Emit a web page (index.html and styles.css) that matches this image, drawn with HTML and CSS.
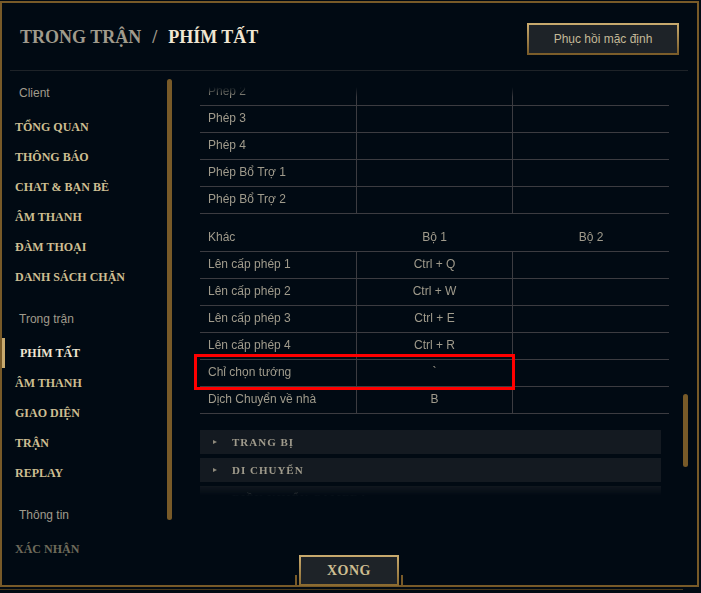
FILE: index.html
```html
<!DOCTYPE html>
<html lang="vi">
<head>
<meta charset="utf-8">
<title>Phím tắt</title>
<link rel="stylesheet" href="styles.css">
</head>
<body>
<div class="frame">
  <header class="header">
    <h1 class="title"><span class="crumb">TRONG TRẬN</span><span class="sep">/</span><span class="current">PHÍM TẤT</span></h1>
    <button class="btn-reset">Phục hồi mặc định</button>
  </header>
  <div class="body">
    <aside class="sidebar">
      <nav class="nav">
        <div class="nav-group">Client</div>
        <a class="nav-item">TỔNG QUAN</a>
        <a class="nav-item">THÔNG BÁO</a>
        <a class="nav-item">CHAT &amp; BẠN BÈ</a>
        <a class="nav-item">ÂM THANH</a>
        <a class="nav-item">ĐÀM THOẠI</a>
        <a class="nav-item">DANH SÁCH CHẶN</a>
        <div class="nav-group spaced">Trong trận</div>
        <a class="nav-item active">PHÍM TẤT</a>
        <a class="nav-item">ÂM THANH</a>
        <a class="nav-item">GIAO DIỆN</a>
        <a class="nav-item">TRẬN</a>
        <a class="nav-item">REPLAY</a>
        <div class="nav-group spaced">Thông tin</div>
        <a class="nav-item dim">XÁC NHẬN</a>
      </nav>
      <div class="side-track"><div class="side-thumb"></div></div>
    </aside>
    <main class="main">
      <div class="viewport">
        <div class="content">
          <div class="table t1">
            <div class="row"><div class="cell">Phép 2</div><div class="cell"></div><div class="cell"></div></div>
            <div class="row"><div class="cell">Phép 3</div><div class="cell"></div><div class="cell"></div></div>
            <div class="row"><div class="cell">Phép 4</div><div class="cell"></div><div class="cell"></div></div>
            <div class="row"><div class="cell">Phép Bổ Trợ 1</div><div class="cell"></div><div class="cell"></div></div>
            <div class="row"><div class="cell">Phép Bổ Trợ 2</div><div class="cell"></div><div class="cell"></div></div>
          </div>
          <div class="table t2">
            <div class="row head"><div class="cell">Khác</div><div class="cell">Bộ 1</div><div class="cell">Bộ 2</div></div>
            <div class="row"><div class="cell">Lên cấp phép 1</div><div class="cell">Ctrl + Q</div><div class="cell"></div></div>
            <div class="row"><div class="cell">Lên cấp phép 2</div><div class="cell">Ctrl + W</div><div class="cell"></div></div>
            <div class="row"><div class="cell">Lên cấp phép 3</div><div class="cell">Ctrl + E</div><div class="cell"></div></div>
            <div class="row"><div class="cell">Lên cấp phép 4</div><div class="cell">Ctrl + R</div><div class="cell"></div></div>
            <div class="row marked"><div class="cell">Chỉ chọn tướng</div><div class="cell">`</div><div class="cell"></div><div class="annot"></div></div>
            <div class="row"><div class="cell">Dịch Chuyển về nhà</div><div class="cell">B</div><div class="cell"></div></div>
          </div>
          <div class="sections">
            <div class="section"><span class="tri"></span><span class="section-label">TRANG BỊ</span></div>
            <div class="section"><span class="tri"></span><span class="section-label">DI CHUYỂN</span></div>
            <div class="section"><span class="tri"></span><span class="section-label">ĐIỀU KHIỂN CAMERA</span></div>
          </div>
        </div>
      </div>
      <div class="track"><div class="thumb"></div></div>
    </main>
  </div>
  <div class="footer"><button class="btn-done">XONG</button></div>
</div>
<div class="base"></div>
</body>
</html>
```

FILE: styles.css
```css
* {
  box-sizing: border-box;
  margin: 0;
  padding: 0;
}

html, body {
  width: 701px;
  height: 593px;
  overflow: hidden;
  background: #010a13;
}

body {
  font-family: "Liberation Sans", Arial, sans-serif;
  padding-top: 1px;
}

.frame {
  position: relative;
  width: 699px;
  height: 586px;
  border: 2px solid #785a28;
  display: flex;
  flex-direction: column;
}

/* Header */
.header {
  height: 68px;
  margin: 0 9px 0 8px;
  padding: 0 9px 0 10px;
  border-bottom: 1px solid #1e2328;
  display: flex;
  align-items: center;
  justify-content: space-between;
}

.title {
  font-family: "Liberation Serif", "Times New Roman", serif;
  font-weight: bold;
  font-size: 18px;
  line-height: 1;
  display: flex;
}

.crumb { color: #a09b8c; }
.sep { color: #a09b8c; margin: 0 11px; }
.current { color: #f0e6d2; }

.btn-reset {
  width: 152px;
  height: 32px;
  margin-top: 5px;
  background: #1e2328;
  border: 2px solid;
  border-image: linear-gradient(to bottom, #c8aa6e, #7a5c29) 1;
  color: #c4b998;
  font-family: "Liberation Sans", Arial, sans-serif;
  font-size: 12px;
}

/* Body */
.body {
  flex: 1;
  display: flex;
  min-height: 0;
}

.sidebar {
  width: 173px;
  display: flex;
}

.nav {
  width: 163px;
  padding-top: 5px;
  display: flex;
  flex-direction: column;
}

.nav-group {
  height: 36px;
  line-height: 34px;
  padding-left: 17px;
  font-size: 12px;
  color: #a09b8c;
}

.nav-group.spaced { margin-top: 10px; }

.nav-item {
  height: 30px;
  line-height: 30px;
  padding-left: 13px;
  font-family: "Liberation Serif", "Times New Roman", serif;
  font-weight: bold;
  font-size: 12px;
  color: #cdbe91;
  white-space: nowrap;
}

.nav-item.active {
  border-left: 3px solid #c8aa6e;
  padding-left: 15px;
  color: #f0e6d2;
}

.nav-item.dim { color: #6e6a5b; }

.side-track {
  width: 5px;
  margin-top: 8px;
  margin-left: 2px;
}

.side-thumb {
  height: 441px;
  background: #785a28;
  border-radius: 3px;
}

/* Main */
.main {
  flex: 1;
  display: flex;
  padding-top: 16px;
}

.viewport {
  width: 494px;
  height: 409px;
  padding-left: 25px;
  overflow: hidden;
  -webkit-mask-image: linear-gradient(to bottom, transparent 0, #000 10px, #000 calc(100% - 12px), transparent 100%);
  mask-image: linear-gradient(to bottom, transparent 0, #000 10px, #000 calc(100% - 12px), transparent 100%);
}

.content {
  margin-top: -8px;
}

.table {
  width: 469px;
}

.t2 { margin-top: 11px; }

.row {
  display: grid;
  grid-template-columns: 156px 156px 157px;
  height: 27px;
  border-bottom: 1px solid #3c3c41;
  font-size: 12px;
  color: #a09b8c;
}

.cell {
  line-height: 24px;
  white-space: nowrap;
}

.cell:first-child { padding-left: 8px; }

.cell + .cell {
  border-left: 1px solid #3c3c41;
  text-align: center;
}

.row.head .cell + .cell { border-left-color: transparent; }

.row.marked { position: relative; }

.annot {
  position: absolute;
  top: -6px;
  left: -6px;
  width: 321px;
  height: 36px;
  border: 3px solid #ff0000;
}

.sections {
  margin-top: 16px;
  display: flex;
  flex-direction: column;
  gap: 4px;
}

.section {
  width: 461px;
  height: 24px;
  flex: none;
  background: #141a21;
  display: flex;
  align-items: center;
  padding-left: 13px;
}

.tri {
  width: 0;
  height: 0;
  border-left: 4px solid #8f8a7c;
  border-top: 2px solid transparent;
  border-bottom: 2px solid transparent;
}

.section-label {
  margin-left: 15px;
  font-family: "Liberation Serif", "Times New Roman", serif;
  font-weight: bold;
  font-size: 11px;
  letter-spacing: 1px;
  color: #a09b8c;
}

.track {
  width: 5px;
  margin-left: 14px;
}

.thumb {
  margin-top: 307px;
  height: 73px;
  background: #785a28;
  border-radius: 3px;
}

/* Footer button overlapping the frame edge */
.footer {
  position: absolute;
  left: 293px;
  bottom: -1px;
  display: flex;
  align-items: flex-end;
  gap: 2px;
}

.footer::before,
.footer::after {
  content: "";
  width: 2px;
  height: 11px;
  background: #785a28;
}

.btn-done {
  width: 100px;
  height: 31px;
  background: #1e2328;
  border: 2px solid;
  border-image: linear-gradient(to bottom, #c8aa6e, #8a6a30) 1;
  color: #cdbe91;
  font-family: "Liberation Serif", "Times New Roman", serif;
  font-weight: bold;
  font-size: 14px;
  letter-spacing: 0.5px;
}

.base {
  width: 683px;
  height: 1px;
  margin-top: 2px;
  background: #4a3a1c;
}
```
